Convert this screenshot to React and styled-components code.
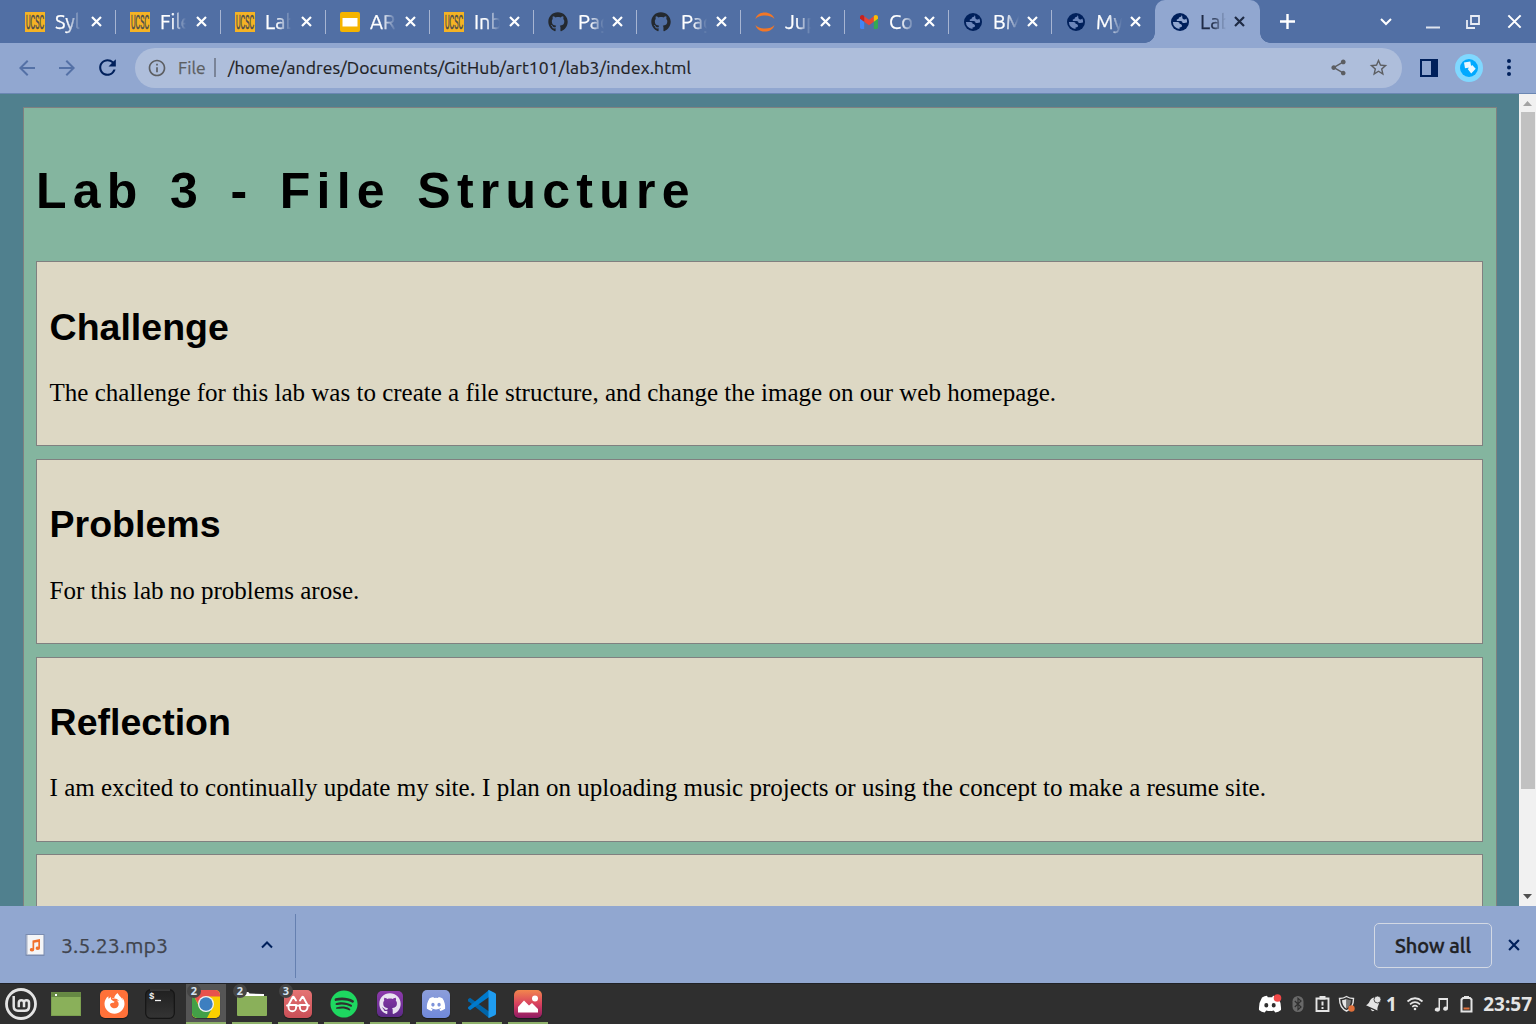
import React from "react";
import styled, { createGlobalStyle, css } from "styled-components";
import { FaGithub, FaDiscord, FaSpotify, FaFirefoxBrowser } from "react-icons/fa";
import { MdStarBorder, MdShare, MdRefresh, MdArrowBack, MdArrowForward, MdInfoOutline } from "react-icons/md";

const Global = createGlobalStyle`
  html, body { margin: 0; padding: 0; height: 100%; overflow: hidden; }
  *, *::before, *::after { box-sizing: border-box; }
  svg { display: block; flex: none; }
`;

const Screen = styled.div`
  width: 1536px;
  height: 1024px;
  display: flex;
  flex-direction: column;
  overflow: hidden;
  font-family: Ubuntu, "Noto Sans", sans-serif;
`;

/* ---------- tab strip ---------- */
const TabStrip = styled.header`
  height: 43px;
  flex: none;
  display: flex;
  padding-left: 11px;
  background: #516fa4;
`;

const TabBox = styled.div`
  width: ${(p) => p.$w}px;
  height: 43px;
  flex: none;
  display: flex;
  align-items: center;
  position: relative;
  padding: 0 14px;
  color: #fff;
  ${(p) =>
    p.$divided &&
    css`
      &::after {
        content: "";
        position: absolute;
        right: 0;
        top: 10px;
        width: 1px;
        height: 24px;
        background: #a7b5d2;
      }
    `}
  ${(p) =>
    p.$active &&
    css`
      background: #91a7d0;
      border-radius: 10px 10px 0 0;
      padding-left: 15px;
      padding-right: 15px;
      color: #1f2b45;
      &::before,
      &::after {
        content: "";
        position: absolute;
        bottom: 0;
        width: 10px;
        height: 10px;
      }
      &::before {
        left: -10px;
        background: radial-gradient(circle at 0 0, transparent 9.5px, #91a7d0 10px);
      }
      &::after {
        right: -10px;
        background: radial-gradient(circle at 100% 0, transparent 9.5px, #91a7d0 10px);
      }
    `}
`;

const Favicon = styled.span`
  width: 20px;
  height: 20px;
  flex: none;
  display: flex;
  align-items: center;
  justify-content: center;
  color: #24292f;
`;

const TabTitle = styled.span`
  width: 26px;
  margin-left: 10px;
  overflow: hidden;
  white-space: nowrap;
  font-size: 20px;
  line-height: 28px;
  font-weight: 450;
  -webkit-text-stroke: 0.25px currentColor;
  mask-image: linear-gradient(90deg, #000 45%, transparent 100%);
`;

const TabClose = styled.span`
  margin-left: auto;
  display: flex;
`;

const NewTab = styled.button`
  width: 34px;
  margin-left: 10px;
  padding: 0;
  border: 0;
  background: none;
  color: #fff;
  display: flex;
  align-items: center;
  justify-content: center;
`;

const WindowControls = styled.div`
  margin-left: auto;
  display: grid;
  grid-template-columns: 55px 40px 40px 43px;
  justify-items: center;
  align-items: center;
  color: #fff;
`;

/* ---------- toolbar ---------- */
const Toolbar = styled.nav`
  height: 51px;
  flex: none;
  display: flex;
  align-items: center;
  padding: 0 0 1px 7px;
  background: #91a7d0;
  border-bottom: 1px solid #6b87b3;
`;

const NavButton = styled.span`
  width: 40px;
  display: flex;
  justify-content: center;
  color: ${(p) => (p.$off ? "#5471a6" : "#00205b")};
`;

const Omnibox = styled.div`
  width: 1267px;
  height: 40px;
  margin-left: 8px;
  padding: 0 13px 0 12px;
  border-radius: 20px;
  background: #aebedb;
  display: flex;
  align-items: center;
  color: #5c5e62;
  font-size: 17.5px;
`;

const Scheme = styled.span`
  margin-left: 11px;
  width: 38px;
  height: 19px;
  line-height: 19px;
  border-right: 2px solid #7a8498;
  -webkit-text-stroke: 0.25px currentColor;
`;

const Address = styled.span`
  margin-left: 12px;
  color: #202124;
  font-size: 17.5px;
  line-height: 24px;
  letter-spacing: 0.11px;
  white-space: nowrap;
  -webkit-text-stroke: 0.2px currentColor;
`;

const OmniActions = styled.span`
  margin-left: auto;
  display: flex;
  gap: 20px;
  align-items: center;
`;

const ToolbarActions = styled.div`
  display: grid;
  grid-template-columns: 53px 28px 51px;
  align-items: center;
  justify-items: center;
`;

/* ---------- page ---------- */
const Viewport = styled.main`
  height: 812px;
  flex: none;
  display: flex;
  overflow: hidden;
  background: #50808e;
`;

const PageArea = styled.div`
  width: 1519px;
  height: 812px;
  padding: 13px 22px 0 23px;
  overflow: hidden;
`;

const Container = styled.article`
  height: 1100px;
  padding: 0 13px 0 12px;
  border: 1px solid #808080;
  background: #84b59f;
`;

const Title = styled.h1`
  margin: 0;
  height: 153.2px;
  padding-top: 54px;
  font: bold 50px/58px "Liberation Sans", Arial, sans-serif;
  letter-spacing: 6.25px;
  word-spacing: 6.25px;
  color: #000;
`;

const Section = styled.section`
  height: 185px;
  margin-bottom: 12.75px;
  padding: 43.4px 12.6px 0;
  border: 1px solid #808080;
  background: #ddd8c4;
  color: #000;
`;

const Heading = styled.h2`
  margin: 0;
  font: bold 37.5px/43px "Liberation Sans", Arial, sans-serif;
`;

const Paragraph = styled.p`
  margin: 29.3px 0 0;
  font: 25px/29px "Liberation Serif", "Times New Roman", serif;
`;

const Scrollbar = styled.aside`
  width: 17px;
  background: #f1f1f1;
  display: flex;
  flex-direction: column;
  align-items: center;
`;

const ScrollArrow = styled.span`
  width: 17px;
  height: 18px;
  padding-bottom: ${(p) => (p.$down ? 2 : 0)}px;
  display: flex;
  align-items: center;
  justify-content: center;
`;

const Thumb = styled.span`
  width: 14px;
  height: 677px;
  margin: 0 0 auto 1px;
  background: #c1c1c1;
`;

/* ---------- download shelf ---------- */
const Shelf = styled.section`
  height: 77px;
  flex: none;
  display: flex;
  align-items: center;
  padding: 0 16px 0 25px;
  background: #91a7d0;
`;

const Download = styled.div`
  width: 271px;
  height: 64px;
  margin-top: 2px;
  padding: 0 22px 2px 0;
  display: flex;
  align-items: center;
  border-right: 1px solid #6580b0;
`;

const FileName = styled.span`
  margin: 0 auto 0 16px;
  font-size: 21.4px;
  line-height: 28px;
  color: #40444d;
  -webkit-text-stroke: 0.25px currentColor;
`;

const ShowAll = styled.button`
  width: 118px;
  height: 45px;
  margin: 1px 16px 0 auto;
  padding: 2px 0 0;
  border: 1px solid #d3d9e4;
  border-radius: 5px;
  background: transparent;
  color: #202124;
  font: 500 20px/28px Ubuntu, "Noto Sans", sans-serif;
  -webkit-text-stroke: 0.4px currentColor;
`;

/* ---------- taskbar ---------- */
const Taskbar = styled.footer`
  height: 41px;
  flex: none;
  display: flex;
  padding-left: 1px;
  background: #2f2f2f;
  border-top: 1px solid #202226;
`;

const Slot = styled.div`
  position: relative;
  width: 40px;
  height: 40px;
  padding-bottom: 1px;
  margin-right: ${(p) => p.$after || 6}px;
  display: flex;
  align-items: center;
  justify-content: center;
  background: ${(p) => (p.$focused ? "#555" : "none")};
  box-shadow: ${(p) => (p.$open ? "inset 0 -2px #8fb26b" : "none")};
`;

const Count = styled.span`
  position: absolute;
  left: 1px;
  top: 0;
  width: 14px;
  height: 14px;
  border-radius: 7px;
  background: #454545;
  color: #d4e2ee;
  text-align: center;
  font: bold 11px/14px "Noto Sans", sans-serif;
`;

const Tile = styled.span`
  width: ${(p) => p.$s || 28}px;
  height: ${(p) => p.$s || 28}px;
  border-radius: 5px;
  background: ${(p) => p.$bg};
  box-shadow: 0 1px 1px rgba(0, 0, 0, 0.45);
  display: flex;
  align-items: center;
  justify-content: center;
  color: #fff;
  overflow: hidden;
`;

const Tray = styled.div`
  margin-left: auto;
  width: 280px;
  display: grid;
  grid-template-columns: 28px 28px 21px 27px 26px 11px 35px 18px 33px 53px;
  align-items: center;
  justify-items: center;
  color: #e4e4e4;
`;

const Clock = styled.time`
  white-space: nowrap;
  justify-self: end;
  margin-right: 4px;
  font: bold 19px/24px "Noto Sans", sans-serif;
`;

const Alerts = styled.span`
  font: bold 19px/24px "Noto Sans", sans-serif;
`;

/* ---------- icons ---------- */
const Cross = ({ size = 11, width = 2.2, color = "currentColor" }) => (
  <svg width={size} height={size} viewBox="0 0 11 11">
    <path d="M1 1 10 10M10 1 1 10" stroke={color} strokeWidth={width} fill="none" />
  </svg>
);

const UcscText = styled.text`
  font: 20px "Liberation Sans", Arial, sans-serif;
`;

const Ucsc = () => (
  <svg width="20" height="20" viewBox="0 0 20 20">
    <path fill="#f5b324" d="M0 0h20v20H0z" />
    <UcscText x="1" y="17" textLength="18" lengthAdjust="spacingAndGlyphs" fill="#4c4d4c" stroke="#4c4d4c" strokeWidth=".6">
      UCSC
    </UcscText>
  </svg>
);

const Slides = () => (
  <svg width="20" height="20" viewBox="0 0 20 20">
    <rect width="20" height="20" rx="2" fill="#f5b400" />
    <path fill="#fff" d="M2.500 6h15v8.500h-15z" />
  </svg>
);

const Jupyter = () => (
  <svg width="20" height="20" viewBox="0 0 20 20" fill="#f37726">
    <path d="M.5 7C2.500-1.800 17-1.800 19.500 7 16 2.300 4 2.300.5 7zM.5 13C2.500 21.800 17 21.800 19.500 13 16 17.700 4 17.700.5 13z" />
  </svg>
);

const Gmail = () => (
  <svg width="18" height="14" viewBox="0 0 18 14">
    <path fill="#4285f4" d="M0 3.500 4.200 6.500V14H1.400A1.400 1.400 0 0 1 0 12.600z" />
    <path fill="#34a853" d="M18 3.500 13.800 6.500V14h2.800a1.400 1.400 0 0 0 1.400-1.400z" />
    <path fill="#ea4335" d="M4.200 1.200 9 4.800l4.800-3.600v5.500L9 10.200 4.200 6.700z" />
    <path fill="#c5221f" d="M0 2.400C0 .2 2.500-.7 4.200.9v5.800L0 3.700z" />
    <path fill="#fbbc04" d="M18 2.400C18 .2 15.500-.7 13.800.9v5.800L18 3.700z" />
  </svg>
);

const Globe = ({ land = "#6c86ba" }) => (
  <svg width="18" height="18" viewBox="0 0 18 18">
    <circle cx="9" cy="9" r="9" fill="#00205b" />
    <path
      fill={land}
      d="M10.800 2.100C10.600 3.600 9.500 4.300 8 4.400c-.3 1.400-1 1.900-2.200 2v1.500h3.700c1.400 0 2 .8 2.100 2h1.900c1 0 1.500-.5 2.600-.4A7.200 7.200 0 0 0 15.300 5.600c-.6.8-1.400 1-2.300.8-1.400-.3-2-1.200-1.600-2.300z"
    />
    <path fill={land} d="M1.900 9h4.800c1.300 0 2 .8 2 2.100 1.300 0 2.200.5 2.300 1.600 0 1.300-.8 1.700-2.500 1.700v1.700A7.100 7.100 0 0 1 1.900 9z" />
  </svg>
);

const Avatar = () => (
  <svg width="28" height="28" viewBox="0 0 28 28">
    <circle cx="14" cy="14" r="14" fill="#80d8ff" />
    <circle cx="14" cy="14" r="9" fill="#00a9ff" />
    <g fill="#e9f7ff">
      <path d="m9 8.500 6.300-1 1 5.800-6.300 1zM12.700 15l4.500-4 3.500 3.800-4.500 4.700z" />
    </g>
  </svg>
);

const MusicFile = () => (
  <svg width="20" height="24" viewBox="0 0 20 24">
    <path fill="#7a8cb0" d="M.5 1h19v22H.5z" />
    <path fill="#f4f5f7" d="M2.500 2h16v19.500h-16z" />
    <path fill="#cdd2dc" d="M1.500 2H3v19.500H1.500z" />
    <path fill="#f0702c" d="M7.500 7.500 15 6v9.300a2.200 1.700 0 1 1-1.700-1.600V9L9.200 9.800v7a2.200 1.700 0 1 1-1.700-1.600z" />
  </svg>
);

const Mint = () => (
  <svg width="32" height="32" viewBox="0 0 32 32" fill="none" stroke="#e4e4e4">
    <circle cx="16" cy="16" r="14.500" strokeWidth="2.800" />
    <path strokeWidth="2.500" d="M8.700 8v10.300c0 2.800 1.800 4.400 4.300 4.400h6.700c2.500 0 4.300-1.600 4.300-4.300v-3.600a2.500 2.500 0 0 0-5 0v4.500M19 14.800a2.500 2.500 0 0 0-5.200 0v4.500" />
  </svg>
);

const Desktop = () => (
  <svg width="30" height="24" viewBox="0 0 30 24">
    <path fill="#8ab05a" d="M0 0h30v24H0z" />
    <path fill="#668844" d="M0 0h30v5H0z" />
    <path fill="#fff" d="M4 2h2v2H4z" />
    <path fill="none" stroke="#6e8f47" strokeWidth=".6" d="M.3.3h29.400v23.400H.3z" />
  </svg>
);

const TermText = styled.text`
  font: bold 9px "Liberation Mono", monospace;
`;

const Terminal = () => (
  <svg width="30" height="30" viewBox="0 0 30 30">
    <defs>
      <linearGradient id="term" x2="0" y2="1">
        <stop stopColor="#202020" />
        <stop offset="1" stopColor="#343434" />
      </linearGradient>
    </defs>
    <rect x=".7" y=".7" width="28.600" height="28.600" rx="5" fill="url(#term)" stroke="#151515" strokeWidth="1.200" />
    <path stroke="#555" d="M5 1h20" />
    <TermText x="4" y="9.500" fill="#f2f2f2">$</TermText>
    <path stroke="#f2f2f2" strokeWidth="1.300" d="M10 11.500h6" />
  </svg>
);

const Chrome = () => (
  <svg width="28" height="28" viewBox="0 0 28 28">
    <path fill="#fbd000" d="M0 0h28v28H0z" />
    <path fill="#e8524c" d="M0 0h28v6.500H14.500L8 17 0 3z" />
    <path fill="#43a047" d="M0 2.500 7.500 17.500 14 21.500l6-3-5 9.500H0z" />
    <circle cx="14" cy="14" r="8" fill="#f3f3f3" />
    <circle cx="14" cy="14" r="6.700" fill="#3d7fc0" />
  </svg>
);

const Files = () => (
  <svg width="30" height="24" viewBox="0 0 30 24">
    <path fill="#fff" d="M8 1.500q0-1.500 1.500-1.500H11q1 0 1.500 1.500L27 2v2H8z" />
    <path fill="#8ab05a" d="M0 4h30v19q0 1-1 1H1q-1 0-1-1z" />
  </svg>
);

const Glasses = () => (
  <svg width="24" height="24" viewBox="0 0 24 24" fill="none" stroke="#fff" strokeWidth="1.900" strokeLinejoin="round" strokeLinecap="round">
    <path d="M2.500 13h7.600v2.400a3.800 3.800 0 0 1-7.600 0zM13.900 13h7.600v2.400a3.800 3.800 0 0 1-7.600 0z" />
    <path d="M10.500 14q1.500-1 3 0M2.800 12.500 6.800 5q.5-.8 1 0L10 8.500M21.200 12.500 17.200 5q-.5-.8-1 0L14 8.500M1 13.500h1.500M21.500 13.500H23" />
  </svg>
);

const Code = () => (
  <svg width="28" height="28" viewBox="0 0 28 28">
    <path fill="#0065a9" d="m0 9.300 2-1.500L21 21.500V28L.3 11.300Q-.3 10.200 0 9.300z" />
    <path fill="#007acc" d="m0 18.500 2 1.700L21 7V0L.3 17Q-.2 17.800 0 18.500z" />
    <path fill="#1f9cf0" d="M21 0q-1.500.2-.5 2v23.500q-.7 2 .5 2.500l6-2.800q1-.5 1-1.600V4.400q0-1-1-1.500z" />
  </svg>
);

const Photo = () => (
  <svg width="28" height="28" viewBox="0 0 28 28">
    <path fill="#fff" d="M4 22.500V17l6-6.500 5 5 3-2.500 6 6v3.500z" />
    <circle cx="21" cy="8.500" r="3" fill="#fff" />
  </svg>
);

const DiscordTray = () => (
  <svg width="24" height="20" viewBox="0 0 24 20">
    <path
      fill="#fff"
      fillRule="evenodd"
      d="M4 3.500Q6.500 2 9 1.800l.8 1.400h4.400l.8-1.400q2.500.2 5 1.700Q23.500 9 23 16q-2.500 2-5.700 2.500l-1.500-2q-3.800 1-7.600 0l-1.500 2Q3.500 18 1 16 .5 9 4 3.500zM8.300 9a2 2.200 0 1 0 0 4.400 2 2.200 0 1 0 0-4.400zm7.400 0a2 2.200 0 1 0 0 4.400 2 2.200 0 1 0 0-4.400z"
    />
    <circle cx="19.500" cy="4" r="3.800" fill="#f04747" />
  </svg>
);

const Bluetooth = () => (
  <svg width="12" height="16" viewBox="0 0 12 16">
    <rect x=".5" width="11" height="16" rx="5.500" fill="#696969" />
    <path fill="none" stroke="#2f2f2f" strokeWidth="1.200" d="M2.800 5 9 11l-3 2.600V2.400L9 5l-6.200 6" />
  </svg>
);

const Clipboard = () => (
  <svg width="16" height="18" viewBox="0 0 16 18">
    <path fill="none" stroke="#e4e4e4" strokeWidth="1.900" d="M1.500 3.500h12V16h-12z" />
    <path fill="#e4e4e4" d="M4.500 1h6v3.500h-6zM6.500 6.500h2v4h-2zM6.500 12h2v2h-2z" />
  </svg>
);

const Shield = () => (
  <svg width="18" height="18" viewBox="0 0 18 18">
    <path fill="none" stroke="#e4e4e4" strokeWidth="1.400" d="M8.500 1.500Q5.500 3.500 1.500 3.500C1.500 10 4 14 8.500 16c4.500-2 7-6 7-12.500q-4 0-7-2z" />
    <path fill="#e4e4e4" d="M8.500 4Q6.500 5 4 5.300c.3 4 1.600 6.800 4.500 8.500z" />
    <path fill="#777" d="M8.500 4q2 1 4.500 1.300c-.3 4-1.600 6.800-4.500 8.500z" />
    <circle cx="13.500" cy="13.500" r="3.200" fill="#e0703a" />
  </svg>
);

const Bell = () => (
  <svg width="17" height="18" viewBox="0 0 17 18" fill="#e4e4e4">
    <path d="M1 10.300C5 9 4.500 3 9 2.500c.5 3 2 4.700 5 5.300-.3 3-2 4-1.500 7.700z" />
    <path d="m5.500 13.800 4 1.800q-2.800 2-4-1.800z" />
    <circle cx="12.500" cy="4.500" r="3.500" stroke="#2f2f2f" strokeWidth=".8" />
  </svg>
);

const Wifi = () => (
  <svg width="18" height="16" viewBox="0 0 18 16" fill="none" stroke="#e4e4e4" strokeWidth="1.700">
    <path d="M1.500 5.500q7.500-6.500 15 0M4 8.300q5-4.300 10 0M6.300 10.800q2.700-2.300 5.400 0" />
    <circle cx="9" cy="13" r="1.300" fill="#e4e4e4" stroke="none" />
  </svg>
);

const Note = () => (
  <svg width="15" height="15" viewBox="0 0 15 15" fill="#e4e4e4">
    <path d="M4.500 1H14v10.500a2.400 2 0 1 1-1.500-1.700V3H6v9.500a2.600 2 0 1 1-1.500-1.700z" />
  </svg>
);

const Battery = () => (
  <svg width="13" height="17" viewBox="0 0 13 17">
    <path fill="none" stroke="#e4e4e4" strokeWidth="2" d="M1.500 3.500 3 2h7l1.500 1.500v12h-10z" />
    <path fill="#e4e4e4" d="M4 0h5v2H4z" />
    <path fill="#e0703a" d="M3.500 11.500h6v2h-6z" />
  </svg>
);

const TABS = [
  { title: "Syl", w: 105, icon: <Ucsc /> },
  { title: "File", w: 105, icon: <Ucsc /> },
  { title: "Lab", w: 105, icon: <Ucsc /> },
  { title: "AR", w: 104, icon: <Slides /> },
  { title: "Inb", w: 104, icon: <Ucsc /> },
  { title: "Pag", w: 103, icon: <FaGithub size={20} /> },
  { title: "Pag", w: 104, icon: <FaGithub size={20} /> },
  { title: "Jup", w: 104, icon: <Jupyter /> },
  { title: "Co", w: 104, icon: <Gmail /> },
  { title: "BM", w: 103, icon: <Globe /> },
  { title: "My", w: 103, icon: <Globe />, plain: true },
  { title: "Lab", w: 105, icon: <Globe land="#91a7d0" />, active: true, plain: true },
];

const SECTIONS = [
  { title: "Challenge", text: "The challenge for this lab was to create a file structure, and change the image on our web homepage." },
  { title: "Problems", text: "For this lab no problems arose." },
  { title: "Reflection", text: "I am excited to continually update my site. I plan on uploading music projects or using the concept to make a resume site." },
  { title: "Results" },
];

export default function App() {
  return (
    <Screen>
      <Global />
      <TabStrip>
        {TABS.map((t, i) => (
          <TabBox key={i} $w={t.w} $divided={!t.plain} $active={t.active}>
            <Favicon>{t.icon}</Favicon>
            <TabTitle>{t.title}</TabTitle>
            <TabClose>
              <Cross />
            </TabClose>
          </TabBox>
        ))}
        <NewTab>
          <svg width="15" height="15" viewBox="0 0 15 15">
            <path d="M7.500 0v15M0 7.500h15" stroke="currentColor" strokeWidth="2.400" />
          </svg>
        </NewTab>
        <WindowControls>
          <svg width="12" height="8" viewBox="0 0 12 8">
            <path d="m1 1 5 5 5-5" fill="none" stroke="currentColor" strokeWidth="2" />
          </svg>
          <svg width="14" height="14" viewBox="0 0 14 14">
            <path d="M0 12.500h14" stroke="#dfe4ee" strokeWidth="2" />
          </svg>
          <svg width="14" height="14" viewBox="0 0 14 14" fill="none" stroke="#e8ecf4">
            <path d="M5 1h8v8H5z" strokeWidth="1.800" />
            <path d="M1 5v8h8" strokeWidth="1.800" />
          </svg>
          <Cross size={15} width={1.5} />
        </WindowControls>
      </TabStrip>

      <Toolbar>
        <NavButton $off><MdArrowBack size={24} /></NavButton>
        <NavButton $off><MdArrowForward size={24} /></NavButton>
        <NavButton><MdRefresh size={25} /></NavButton>
        <Omnibox>
          <MdInfoOutline size={20} />
          <Scheme>File</Scheme>
          <Address>/home/andres/Documents/GitHub/art101/lab3/index.html</Address>
          <OmniActions>
            <MdShare size={19} />
            <MdStarBorder size={21} />
          </OmniActions>
        </Omnibox>
        <ToolbarActions>
          <svg width="18" height="18" viewBox="0 0 18 18">
            <path fill="#00205b" fillRule="evenodd" d="M0 0h18v18H0zM2 2v14h9V2z" />
          </svg>
          <Avatar />
          <svg width="4" height="17" viewBox="0 0 4 17" fill="#00205b">
            <circle cx="2" cy="2" r="2" />
            <circle cx="2" cy="8.500" r="2" />
            <circle cx="2" cy="15" r="2" />
          </svg>
        </ToolbarActions>
      </Toolbar>

      <Viewport>
        <PageArea>
          <Container>
            <Title>Lab 3 - File Structure</Title>
            {SECTIONS.map((s) => (
              <Section key={s.title}>
                <Heading>{s.title}</Heading>
                {s.text && <Paragraph>{s.text}</Paragraph>}
              </Section>
            ))}
          </Container>
        </PageArea>
        <Scrollbar>
          <ScrollArrow>
            <svg width="9" height="5" viewBox="0 0 9 5"><path fill="#a3a3a3" d="m0 5 4.500-5L9 5z" /></svg>
          </ScrollArrow>
          <Thumb />
          <ScrollArrow $down>
            <svg width="9" height="5" viewBox="0 0 9 5"><path fill="#505050" d="m0 0 4.500 5L9 0z" /></svg>
          </ScrollArrow>
        </Scrollbar>
      </Viewport>

      <Shelf>
        <Download>
          <MusicFile />
          <FileName>3.5.23.mp3</FileName>
          <svg width="12" height="8" viewBox="0 0 12 8">
            <path d="m1 6.500 5-5 5 5" fill="none" stroke="#00205b" strokeWidth="2" />
          </svg>
        </Download>
        <ShowAll>Show all</ShowAll>
        <Cross size={12} width={2} color="#00205b" />
      </Shelf>

      <Taskbar>
        <Slot $after={5}><Mint /></Slot>
        <Slot $after={8}><Desktop /></Slot>
        <Slot><Tile $bg="#ff7139"><FaFirefoxBrowser size={21} /></Tile></Slot>
        <Slot><Terminal /></Slot>
        <Slot $open $focused><Tile $bg="#fbd000"><Chrome /></Tile><Count>2</Count></Slot>
        <Slot $open><Files /><Count>2</Count></Slot>
        <Slot $open><Tile $bg="linear-gradient(#e57373, #c94f57)"><Glasses /></Tile><Count>3</Count></Slot>
        <Slot $open><FaSpotify size={28} color="#1ed760" /></Slot>
        <Slot $open><Tile $s={26} $bg="linear-gradient(#8e3aac, #5b2a86)"><FaGithub size={22} color="#e9e3f0" /></Tile></Slot>
        <Slot $open><Tile $bg="linear-gradient(#8c9eda, #7089da)"><FaDiscord size={20} /></Tile></Slot>
        <Slot $open><Code /></Slot>
        <Slot $open><Tile $bg="linear-gradient(#f2864d, #d8405f 50%, #8e1a63)"><Photo /></Tile></Slot>
        <Tray>
          <DiscordTray />
          <Bluetooth />
          <Clipboard />
          <Shield />
          <Bell />
          <Alerts>1</Alerts>
          <Wifi />
          <Note />
          <Battery />
          <Clock>23:57</Clock>
        </Tray>
      </Taskbar>
    </Screen>
  );
}
